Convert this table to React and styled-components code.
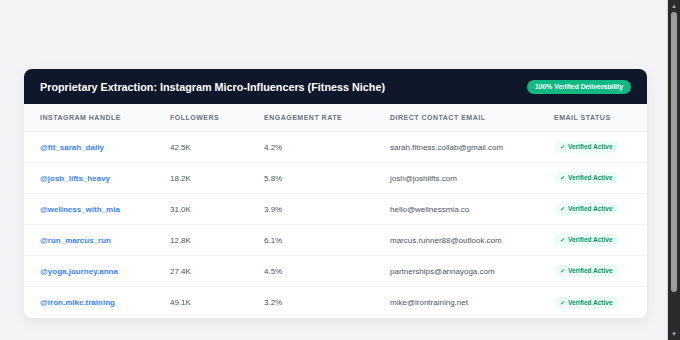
import styled, { createGlobalStyle } from "styled-components";

const GlobalStyle = createGlobalStyle`
    html, body {
        margin: 0;
        padding: 0;
        background: #f3f4f6;
        font-family: "Liberation Sans", Arial, sans-serif;
    }
`

const Page = styled.div`
    padding: 69px 33px 66px 24px;
`
const Card = styled.div`
    background: #ffffff;
    border-radius: 8px;
    overflow: hidden;
    box-shadow: 0 4px 14px rgba(15, 23, 42, 0.07);
`
const Header = styled.div`
    height: 35px;
    padding: 0 16px;
    background: #0f172a;
    display: flex;
    align-items: center;
    justify-content: space-between;
`
const Title = styled.h1`
    margin: 0;
    color: #ffffff;
    font-size: 10.8px;
    font-weight: 700;
`
const Badge = styled.span`
    background: #10b981;
    color: #ffffff;
    font-size: 6.8px;
    font-weight: 700;
    padding: 3px 8px;
    border-radius: 999px;
    line-height: 8px;
`
const Row = styled.div`
    display: grid;
    grid-template-columns: 130px 94px 126px 164px 1fr;
    align-items: center;
    padding: 0 16px;
    height: ${props => props.$head ? "27px" : "30px"};
    background: ${props => props.$head ? "#f8fafc" : "#ffffff"};
    border-bottom: 1px solid ${props => props.$head ? "#eef1f5" : "#f1f3f6"};
    &:last-child {
        border-bottom: none;
        height: 31px;
    }
`
const HeadCell = styled.div`
    font-size: 7px;
    font-weight: 700;
    letter-spacing: 0.5px;
    text-transform: uppercase;
    color: #6b7280;
`
const Cell = styled.div`
    font-size: 8px;
    color: #4b5563;
`
const Handle = styled(Cell)`
    font-size: 8px;
    font-weight: 700;
    color: #3b82f6;
`
const Status = styled.span`
    justify-self: start;
    background: #ecfdf5;
    color: #059669;
    font-size: 6.5px;
    font-weight: 700;
    padding: 3px 6px;
    border-radius: 999px;
    line-height: 6px;
`
const Check = styled.span`
    font-size: 5.5px;
    margin-right: 3px;
`

/* replica of the window scrollbar seen on the right edge */
const ScrollTrack = styled.div`
    position: fixed;
    top: 0;
    right: 0;
    bottom: 0;
    width: 12px;
    background: #2b2b2b;
    border-left: 1px solid #d4d4d4;
`
const ScrollThumb = styled.div`
    position: absolute;
    top: 12px;
    left: 3px;
    width: 6px;
    height: 280px;
    border-radius: 3px;
    background: #9e9e9e;
`
const ScrollArrow = styled.span`
    position: absolute;
    left: 0;
    width: 12px;
    text-align: center;
    font-size: 6px;
    line-height: 8px;
    color: #a8a8a8;
    ${props => props.$down ? "bottom: 2px;" : "top: 2px;"}
`

const columns = ["Instagram Handle", "Followers", "Engagement Rate", "Direct Contact Email", "Email Status"];

const influencers = [
    {handle: "@fit_sarah_daily", followers: "42.5K", rate: "4.2%", email: "sarah.fitness.collab@gmail.com"},
    {handle: "@josh_lifts_heavy", followers: "18.2K", rate: "5.8%", email: "josh@joshlifts.com"},
    {handle: "@wellness_with_mia", followers: "31.0K", rate: "3.9%", email: "hello@wellnessmia.co"},
    {handle: "@run_marcus_run", followers: "12.8K", rate: "6.1%", email: "marcus.runner88@outlook.com"},
    {handle: "@yoga.journey.anna", followers: "27.4K", rate: "4.5%", email: "partnerships@annayoga.com"},
    {handle: "@iron.mike.training", followers: "49.1K", rate: "3.2%", email: "mike@irontraining.net"},
];

const App = () => {
    return (
        <Page>
            <GlobalStyle />
            <Card>
                <Header>
                    <Title>Proprietary Extraction: Instagram Micro-Influencers (Fitness Niche)</Title>
                    <Badge>100% Verified Deliverability</Badge>
                </Header>
                <Row $head>
                    {columns.map(c => <HeadCell key={c}>{c}</HeadCell>)}
                </Row>
                {influencers.map(inf => (
                    <Row key={inf.handle}>
                        <Handle>{inf.handle}</Handle>
                        <Cell>{inf.followers}</Cell>
                        <Cell>{inf.rate}</Cell>
                        <Cell>{inf.email}</Cell>
                        <Status><Check>✓</Check>Verified Active</Status>
                    </Row>
                ))}
            </Card>
            <ScrollTrack>
                <ScrollArrow>▲</ScrollArrow>
                <ScrollThumb />
                <ScrollArrow $down>▼</ScrollArrow>
            </ScrollTrack>
        </Page>
    )
}

export default App
